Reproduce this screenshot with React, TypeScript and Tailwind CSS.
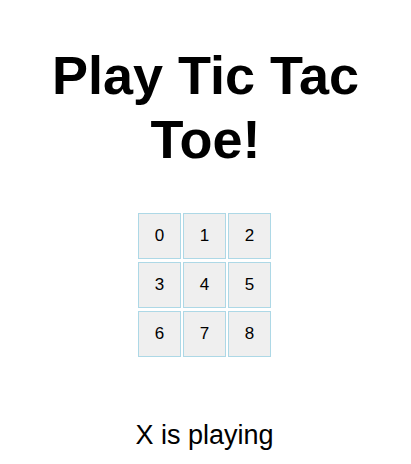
import { useState } from 'react';

export default function App() {
  const [cells] = useState(['0', '1', '2', '3', '4', '5', '6', '7', '8']);

  return (
    <div className="flex flex-col items-center bg-white font-['Liberation_Sans',Arial,sans-serif] text-black">
      <h1 className="mt-[43px] w-[340px] text-center text-[54px] font-bold leading-[64px]">
        Play Tic Tac Toe!
      </h1>

      {/* BOARD */}
      <div className="mt-[42px] mr-[2px] grid grid-cols-[43px_43px_43px] gap-x-[2px] gap-y-[3px]">
        {cells.map((c) => (
          <button
            key={c}
            className="flex h-[46px] items-center justify-center border border-[#add8e6] bg-[#efefef] text-[17px]"
          >
            {c}
          </button>
        ))}
      </div>

      <p className="mt-[58px] mr-[2px] text-[27px]">X is playing</p>
    </div>
  );
}
